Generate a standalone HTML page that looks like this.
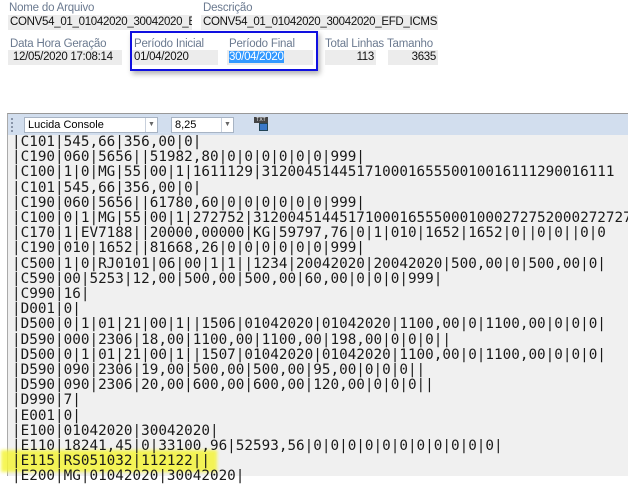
<!DOCTYPE html>
<html><head><meta charset="utf-8"><style>
*{margin:0;padding:0;box-sizing:border-box}
body{width:628px;height:476px;overflow:hidden;background:#fff;font-family:"Liberation Sans",sans-serif;position:relative}
.l{position:absolute;font-size:11.5px;color:#6b7a90;white-space:nowrap;letter-spacing:-0.2px}
.b{position:absolute;height:15px;background:#ececec;font-size:11.5px;color:#111;line-height:15px;padding-left:2px;white-space:nowrap;overflow:hidden;letter-spacing:-0.3px}
#hl{position:absolute;left:130px;top:31px;width:188px;height:40px;border:2px solid #1010e0;box-shadow:2px 3px 5px rgba(0,0,0,.3)}
#panel{position:absolute;left:7px;top:113px;width:621px;height:363px;background:#f0f0f0;border-left:1px solid #aaa;border-top:1px solid #999;overflow:visible}
#tb{position:absolute;left:0;top:0;width:100%;height:21px;background:#d2deee}
.cb{position:absolute;top:3px;height:16px;background:#fff;border:1px solid #a8b4c4;font-size:11px;line-height:14px;padding-left:3px}
.ar{position:absolute;right:0;top:0;width:12px;height:14px;border-left:1px solid #c8d0dc;font-size:7px;color:#666;text-align:center;line-height:14px}
#txt{position:absolute;left:4px;top:21px;font-family:"DejaVu Sans Mono",monospace;font-size:14.3px;line-height:15.2px;color:#1a1a1a;white-space:pre}
#yl{position:absolute;left:-7px;top:336px;width:216px;height:22px;background:#f4f43a;opacity:.85;filter:blur(1.5px)}
</style></head><body>
<div class="l" style="left:9px;top:2px">Nome do Arquivo</div>
<div class="b" style="left:8px;top:15px;width:184px">CONV54_01_01042020_30042020_EFD_IC</div>
<div class="l" style="left:203px;top:2px">Descrição</div>
<div class="b" style="left:201px;top:15px;width:237px">CONV54_01_01042020_30042020_EFD_ICMSIPI.txt</div>
<div class="l" style="left:10px;top:38px">Data Hora Geração</div>
<div class="b" style="left:8px;top:50px;width:114px">&nbsp;12/05/2020 17:08:14</div>
<div class="l" style="left:134px;top:38px">Período Inicial</div>
<div class="b" style="left:132px;top:50px;width:86px">01/04/2020</div>
<div class="l" style="left:229px;top:38px">Período Final</div>
<div class="b" style="left:227px;top:50px;width:86px"><span style="background:#3399ff;color:#fff">30/04/2020</span></div>
<div class="l" style="left:325px;top:38px">Total Linhas</div>
<div class="b" style="left:325px;top:50px;width:51px;text-align:right;padding-right:2px">113</div>
<div class="l" style="left:387px;top:38px">Tamanho</div>
<div class="b" style="left:388px;top:50px;width:50px;text-align:right;padding-right:2px">3635</div>
<div id="hl"></div>
<div id="panel">
<div id="tb">
<div style="position:absolute;left:3px;top:4px;width:2px;height:14px;border-left:2px dotted #8894a8"></div>
<div class="cb" style="left:16px;width:134px">Lucida Console<div class="ar">▼</div></div>
<div class="cb" style="left:163px;width:63px">8,25<div class="ar">▼</div></div>
<div style="position:absolute;left:246px;top:3px;width:14px;height:6px;background:#444;font-size:5px;color:#fff;line-height:6px;text-align:center">TXT</div>
<div style="position:absolute;left:251px;top:9px;width:9px;height:8px;background:#3a78c8;border:1px solid #245"></div>
</div>
<div id="yl"></div>
<div id="txt">|C101|545,66|356,00|0|
|C190|060|5656||51982,80|0|0|0|0|0|0|999|
|C100|1|0|MG|55|00|1|1611129|31200451445171000165550010016111290016111
|C101|545,66|356,00|0|
|C190|060|5656||61780,60|0|0|0|0|0|0|999|
|C100|0|1|MG|55|00|1|272752|31200451445171000165550001000272752000272727
|C170|1|EV7188||20000,00000|KG|59797,76|0|1|010|1652|1652|0||0|0||0|0
|C190|010|1652||81668,26|0|0|0|0|0|0|999|
|C500|1|0|RJ0101|06|00|1|1||1234|20042020|20042020|500,00|0|500,00|0|
|C590|00|5253|12,00|500,00|500,00|60,00|0|0|0|999|
|C990|16|
|D001|0|
|D500|0|1|01|21|00|1||1506|01042020|01042020|1100,00|0|1100,00|0|0|0|
|D590|000|2306|18,00|1100,00|1100,00|198,00|0|0|0||
|D500|0|1|01|21|00|1||1507|01042020|01042020|1100,00|0|1100,00|0|0|0|
|D590|090|2306|19,00|500,00|500,00|95,00|0|0|0||
|D590|090|2306|20,00|600,00|600,00|120,00|0|0|0||
|D990|7|
|E001|0|
|E100|01042020|30042020|
|E110|18241,45|0|33100,96|52593,56|0|0|0|0|0|0|0|0|0|0|0|
|E115|RS051032|112122||
|E200|MG|01042020|30042020|</div>
</div>
</body></html>
